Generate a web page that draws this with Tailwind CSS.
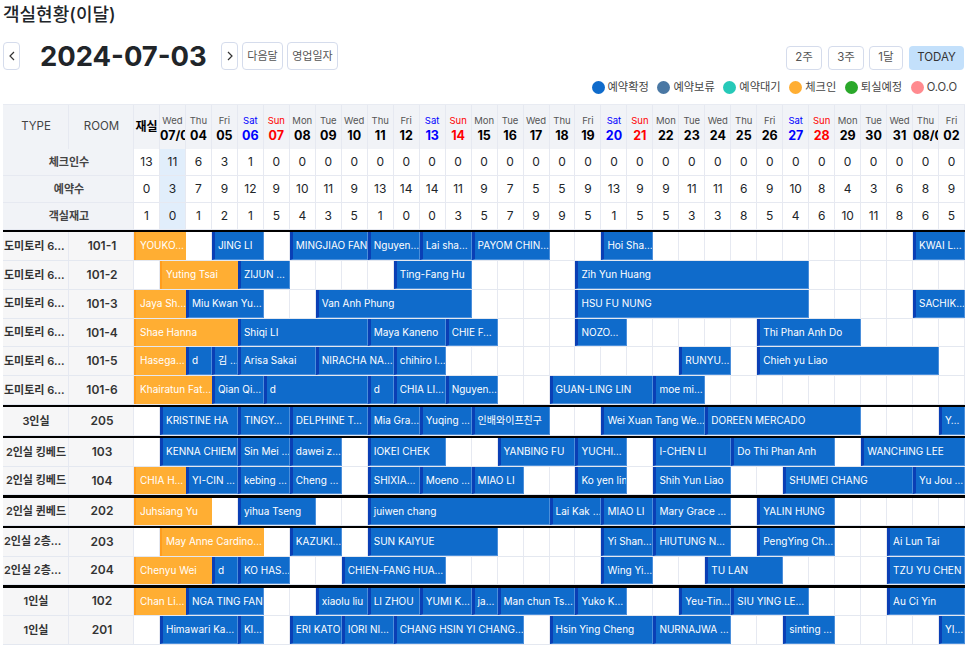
<!DOCTYPE html>
<html lang="ko">
<head>
  <meta charset="UTF-8">
  <meta name="viewport" content="width=device-width, initial-scale=1.0">
  <title>객실현황</title>
  <script src="https://cdn.jsdelivr.net/npm/@tailwindcss/browser@4"></script>
</head>
<body class="bg-white font-['Inter','Noto_Sans_CJK_KR',sans-serif] text-[#212529] overflow-hidden">
  <div class="w-[966px] h-[645px] pl-[3px] pr-px">
    <h1 class="h-[30px] text-[18px] leading-[30px] font-medium">객실현황(이달)</h1>

    <!-- toolbar -->
    <div class="flex justify-between items-end mt-3 h-7">
      <div class="flex items-center h-7">
        <button class="w-[17px] h-7 border border-[#d5dcec] rounded flex items-center justify-center">
          <svg class="w-2.5 h-2.5" viewBox="0 0 10 10" fill="none" stroke="#333" stroke-width="1.2"><path d="M7 1 3 5l4 4"/></svg>
        </button>
        <div class="w-[201px] pl-5 text-[27.4px] leading-7 font-bold whitespace-nowrap">2024-07-03</div>
        <button class="w-[17px] h-7 border border-[#d5dcec] rounded flex items-center justify-center">
          <svg class="w-2.5 h-2.5" viewBox="0 0 10 10" fill="none" stroke="#333" stroke-width="1.2"><path d="M3 1l4 4-4 4"/></svg>
        </button>
        <button class="ml-1 w-[41px] h-7 border border-[#d5dcec] rounded text-[11px] text-[#555]">다음달</button>
        <button class="ml-1 w-[51px] h-7 border border-[#d5dcec] rounded text-[11px] text-[#555]">영업일자</button>
      </div>
      <div class="flex items-center gap-[5px] pr-px text-[11.5px] text-[#555]">
        <button class="w-9 h-6 mr-px border border-[#d5dcec] rounded">2주</button>
        <button class="w-9 h-6 border border-[#d5dcec] rounded">3주</button>
        <button class="w-[34px] h-6 border border-[#d5dcec] rounded">1달</button>
        <button class="w-[55px] h-6 ml-px rounded bg-[#c3e0fb] text-[#333]">TODAY</button>
      </div>
    </div>

    <!-- legend -->
    <div class="flex justify-end items-center h-[18px] mt-2 pr-2 text-[11.25px] text-[#444]">
      <span class="flex items-center gap-[3px] ml-[8.5px]"><i class="w-[13px] h-[13px] rounded-full bg-[#0f6bcb]"></i>예약확정</span>
      <span class="flex items-center gap-[3px] ml-[8.5px]"><i class="w-[13px] h-[13px] rounded-full bg-[#4a78a4]"></i>예약보류</span>
      <span class="flex items-center gap-[3px] ml-[8.5px]"><i class="w-[13px] h-[13px] rounded-full bg-[#26c9b8]"></i>예약대기</span>
      <span class="flex items-center gap-[3px] ml-[8.5px]"><i class="w-[13px] h-[13px] rounded-full bg-[#ffae33]"></i>체크인</span>
      <span class="flex items-center gap-[3px] ml-[8.5px]"><i class="w-[13px] h-[13px] rounded-full bg-[#2aa82a]"></i>퇴실예정</span>
      <span class="flex items-center gap-[3px] ml-[8.5px]"><i class="w-[13px] h-[13px] rounded-full bg-[#ff8a8f]"></i>O.O.O</span>
    </div>

    <!-- calendar -->
    <div class="mt-2 text-xs">
      <div id="head" class="grid grid-cols-[66px_65px_repeat(32,minmax(0,1fr))] h-[45px] bg-[#f1f3f7] border-t border-[#e8ebf2]">
        <div class="flex items-center justify-center pl-px border-r border-[#e6e9f1] text-[11.5px] text-[#444]">TYPE</div>
        <div class="flex items-center justify-center pl-px border-r border-[#e6e9f1] text-[11.5px] text-[#444]">ROOM</div>
        <div class="flex items-center justify-center border-r border-[#e6e9f1] font-bold text-black">재실</div>
      </div>
      <div id="counts"></div>
      <div id="rooms"></div>
    </div>
  </div>

  <script>
    const days = ['Wed','Thu','Fri','Sat','Sun','Mon','Tue'];
    const dates = ['07/03','04','05','06','07','08','09','10','11','12','13','14','15','16','17','18','19','20','21','22','23','24','25','26','27','28','29','30','31','08/01','02'];
    const head = document.getElementById('head');
    dates.forEach((date, i) => {
      const day = days[i % 7];
      const dayColor = day === 'Sat' ? 'text-[#0000ff]' : day === 'Sun' ? 'text-[#ff0000]' : 'text-[#555]';
      const dateColor = day === 'Sat' ? 'text-[#0000ff]' : day === 'Sun' ? 'text-[#ff0000]' : 'text-black';
      const col = document.createElement('div');
      col.className = 'flex flex-col justify-center overflow-hidden pt-px text-center border-r border-[#e6e9f1] whitespace-nowrap';
      col.innerHTML = `<span class="text-[9.5px] leading-[15px] ${dayColor}">${day}</span><span class="text-[12.5px] leading-[15px] font-bold ${dateColor}">${date}</span>`;
      head.appendChild(col);
    });

    const counts = [
      ['체크인수', [13,11,6,3,1,0,0,0,0,0,0,0,0,0,0,0,0,0,0,0,0,0,0,0,0,0,0,0,0,0,0,0]],
      ['예약수', [0,3,7,9,12,9,10,11,9,13,14,14,11,9,7,5,5,9,13,9,9,11,11,6,9,10,8,4,3,6,8,9]],
      ['객실재고', [1,0,1,2,1,5,4,3,5,1,0,0,3,5,7,9,9,5,1,5,5,3,3,8,5,4,6,10,11,8,6,5]],
    ];
    document.getElementById('counts').innerHTML = counts.map(([label, nums]) =>
      `<div class="grid grid-cols-[131px_repeat(32,minmax(0,1fr))] h-[27px] items-stretch">
        <div class="flex items-center justify-center pl-0.5 bg-[#f1f3f7] border-r border-b border-[#e6e9f1] text-[11px] font-semibold text-[#444]">${label}</div>
        ${nums.map((n, i) => `<div class="flex items-center justify-center border-r border-b border-[#e6e9f1] ${i === 1 ? 'bg-[#e1eefb]' : ''}">${n}</div>`).join('')}
      </div>`).join('');

    // row height of each group, then rows as [type, room, [start column, end column, guest, checked in]]
    const groups = [
      ['h-[28.75px]', [
        ['도미토리 6…','101-1',[[0,2,'YOUKO…',1],[3,5,'JING LI'],[6,9,'MINGJIAO FAN'],[9,11,'Nguyen…'],[11,13,'Lai sha…'],[13,16,'PAYOM CHIN…'],[18,20,'Hoi Sha…'],[30,32,'KWAI L…']]],
        ['도미토리 6…','101-2',[[1,4,'Yuting Tsai',1],[4,6,'ZIJUN …'],[10,13,'Ting-Fang Hu'],[17,26,'Zih Yun Huang']]],
        ['도미토리 6…','101-3',[[0,2,'Jaya Sh…',1],[2,5,'Miu Kwan Yu…'],[7,13,'Van Anh Phung'],[17,26,'HSU FU NUNG'],[30,32,'SACHIK…']]],
        ['도미토리 6…','101-4',[[0,4,'Shae Hanna',1],[4,9,'Shiqi LI'],[9,12,'Maya Kaneno'],[12,14,'CHIE F…'],[17,19,'NOZO…'],[24,28,'Thi Phan Anh Do']]],
        ['도미토리 6…','101-5',[[0,2,'Hasega…',1],[2,3,'d'],[3,4,'김 …'],[4,7,'Arisa Sakai'],[7,10,'NIRACHA NA…'],[10,12,'chihiro l…'],[21,23,'RUNYU…'],[24,31,'Chieh yu Liao']]],
        ['도미토리 6…','101-6',[[0,3,'Khairatun Fat…',1],[3,5,'Qian Qi…'],[5,9,'d'],[9,10,'d'],[10,12,'CHIA LI…'],[12,14,'Nguyen…'],[16,20,'GUAN-LING LIN'],[20,22,'moe mi…']]],
      ]],
      ['h-[28.6px]', [
        ['3인실','205',[[1,4,'KRISTINE HA'],[4,6,'TINGY…'],[6,9,'DELPHINE T…'],[9,11,'Mia Gra…'],[11,13,'Yuqing …'],[13,16,'인배와이프친구'],[18,22,'Wei Xuan Tang We…'],[22,28,'DOREEN MERCADO'],[31,32,'Y…']]],
      ]],
      ['h-[28.6px]', [
        ['2인실 킹베드','103',[[1,4,'KENNA CHIEM'],[4,6,'Sin Mei …'],[6,8,'dawei z…'],[9,12,'IOKEI CHEK'],[14,17,'YANBING FU'],[17,19,'YUCHI…'],[20,23,'I-CHEN LI'],[23,27,'Do Thi Phan Anh'],[28,32,'WANCHING LEE']]],
        ['2인실 킹베드','104',[[0,2,'CHIA H…',1],[2,4,'YI-CIN …'],[4,6,'kebing …'],[6,8,'Cheng …'],[9,11,'SHIXIA…'],[11,13,'Moeno …'],[13,15,'MIAO LI'],[17,19,'Ko yen lin'],[20,23,'Shih Yun Liao'],[25,30,'SHUMEI CHANG'],[30,32,'Yu Jou …']]],
      ]],
      ['h-[27.7px]', [
        ['2인실 퀸베드','202',[[0,3,'Juhsiang Yu',1],[4,7,'yihua Tseng'],[9,16,'juiwen chang'],[16,18,'Lai Kak …'],[18,20,'MIAO LI'],[20,23,'Mary Grace …'],[24,27,'YALIN HUNG']]],
      ]],
      ['h-[28.6px]', [
        ['2인실 2층…','203',[[1,5,'May Anne Cardino…',1],[6,8,'KAZUKI…'],[9,14,'SUN KAIYUE'],[18,20,'Yi Shan…'],[20,23,'HIUTUNG N…'],[24,27,'PengYing Ch…'],[29,32,'Ai Lun Tai']]],
        ['2인실 2층…','204',[[0,3,'Chenyu Wei',1],[3,4,'d'],[4,6,'KO HAS…'],[8,12,'CHIEN-FANG HUA…'],[18,20,'Wing Yi…'],[22,25,'TU LAN'],[29,32,'TZU YU CHEN']]],
      ]],
      ['h-[28.6px]', [
        ['1인실','102',[[0,2,'Chan Li…',1],[2,5,'NGA TING FAN'],[7,9,'xiaolu liu'],[9,11,'LI ZHOU'],[11,13,'YUMI K…'],[13,14,'ja…'],[14,17,'Man chun Ts…'],[17,19,'Yuko K…'],[21,23,'Yeu-Tin…'],[23,26,'SIU YING LE…'],[29,32,'Au Ci Yin']]],
        ['1인실','201',[[1,4,'Himawari Ka…'],[4,5,'KI…'],[6,8,'ERI KATO'],[8,10,'IORI NI…'],[10,15,'CHANG HSIN YI CHANG…'],[16,20,'Hsin Ying Cheng'],[20,23,'NURNAJWA …'],[25,27,'sinting …'],[31,32,'YI…']]],
      ]],
    ];

    const barClass = 'h-full overflow-hidden whitespace-nowrap border-l-[3px] border-r border-b border-r-[#4b8fdb] border-b-[#4b8fdb] border-l-[#0a3fb5] bg-[#0f6bcb] pl-[3px] text-[10px] leading-[27px] text-white';
    const inClass = 'h-full overflow-hidden whitespace-nowrap border-l-2 border-l-[#ff9d1e] bg-[#ffae33] pl-1 text-[10px] leading-[27px] text-white';

    function roomRow([type, room, bars], height) {
      let cells = '';
      let col = 0;
      bars.forEach(([start, end, name, checkedIn]) => {
        for (; col < start; col++) cells += '<div class="border-r border-[#e6e9f1]"></div>';
        cells += `<div class="${checkedIn ? inClass : barClass}" style="grid-column: span ${end - start}">${name}</div>`;
        col = end;
      });
      for (; col < 32; col++) cells += '<div class="border-r border-[#e6e9f1]"></div>';
      const typeAlign = type.endsWith('…') ? 'justify-start pl-px' : 'justify-center pl-px';
      return `<div class="grid grid-cols-[66px_65px_repeat(32,minmax(0,1fr))] ${height} border-b border-[#e4e8f0]">
        <div class="flex items-center ${typeAlign} overflow-hidden whitespace-nowrap bg-[#f6f6f7] border-r border-[#e6e9f1] text-[11px] font-semibold text-[#333]">${type}</div>
        <div class="flex items-center justify-center pl-0.5 bg-[#f6f6f7] border-r border-[#e6e9f1] font-semibold text-[#333]">${room}</div>
        ${cells}
      </div>`;
    }

    document.getElementById('rooms').innerHTML = groups.map(([height, rows]) =>
      '<div class="h-[2.4px] bg-black"></div>' + rows.map(row => roomRow(row, height)).join('')).join('');
  </script>
</body>
</html>
